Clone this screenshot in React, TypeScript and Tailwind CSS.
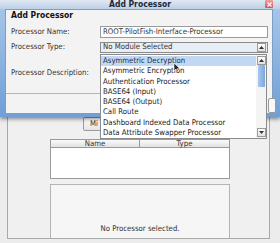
import React from 'react'

const font = "font-['Liberation_Sans_Narrow','DejaVu_Sans_Condensed',sans-serif]"

const processorTypes = [
  'Asymmetric Decryption',
  'Asymmetric Encryption',
  'Authentication Processor',
  'BASE64 (Input)',
  'BASE64 (Output)',
  'Call Route',
  'Dashboard Indexed Data Processor',
  'Data Attribute Swapper Processor',
]

function Arrow({ up }: { up?: boolean }) {
  return (
    <svg width="5" height="3" viewBox="0 0 5 3" className="block">
      {up ? <path d="M0 3 L2.5 0 L5 3 Z" fill="#333" /> : <path d="M0 0 L2.5 3 L5 0 Z" fill="#333" />}
    </svg>
  )
}

function ScrollButton({ up }: { up?: boolean }) {
  return (
    <div className="w-[9px] h-[9px] border border-[#9a9a9a] bg-gradient-to-b from-white to-[#e2e2e2] flex items-center justify-center">
      <Arrow up={up} />
    </div>
  )
}

function BackDialog() {
  return (
    <div className="pt-[95px]">
      <div className="ml-[7px] w-[263px] h-[144px] border border-t-0 border-[#a9a9a9] bg-[#f0f0f0] pl-[42px] flex flex-col">
        <div className="mt-[22px] ml-[33px] w-[22px] h-[14px] border border-[#9a9a9a] rounded-[2px] bg-gradient-to-b from-white to-[#e4e4e4] flex items-center pl-[6px] text-[7.75px] text-[#333]">
          Mi
        </div>
        <div className="mt-[8px] w-[180px] h-[40px] border border-[#9a9a9a] bg-white flex flex-col">
          <div className="h-[8px] flex border-b border-[#9a9a9a] bg-gradient-to-b from-[#fafafa] to-[#e2e2e2] text-[7.75px] leading-[8px] text-[#333]">
            <div className="w-[89px] border-r border-[#9a9a9a] text-center">Name</div>
            <div className="flex-1 text-center">Type</div>
          </div>
        </div>
        <div className="mt-[5px] w-[180px] flex-1 border border-b-0 border-[#b5b5b5] bg-[#f6f6f6] flex items-end justify-center pb-[3px] text-[7.75px] text-[#333]">
          No Processor selected.
        </div>
      </div>
    </div>
  )
}

function FrontDialog() {
  return (
    <div className="absolute left-0 top-0 w-[280px] h-[117px] bg-gradient-to-b from-[#a9c8ea] to-[#6f9fd6] shadow-[0_2px_4px_rgba(0,0,0,0.45)] flex flex-col">
      <div className="h-[10px] relative flex items-center justify-center bg-gradient-to-b from-[#dfe8f2] to-[#bcd0e8]">
        <span className="text-[8.5px] font-bold text-[#1b2a3a] leading-none">Add Processor</span>
        <div className="absolute right-[7px] top-0 w-[8px] h-[8px] rounded-[1px] bg-gradient-to-b from-[#f0a0a0] to-[#d75050] flex items-center justify-center">
          <svg width="5" height="5" viewBox="0 0 5 5">
            <path d="M0.5 0.5 L4.5 4.5 M4.5 0.5 L0.5 4.5" stroke="white" strokeWidth="1.2" />
          </svg>
        </div>
      </div>
      <div className="ml-[5px] mr-[7px] mb-[4px] flex-1 bg-[#f3f3f3] border border-[#7d9ec4] flex flex-col text-[7.75px] text-[#333]">
        <div className="pl-[5px] h-[10px] leading-[10px] text-[8.5px] font-bold text-[#111]">Add Processor</div>
        <div className="mt-[6px] pl-[5px] flex items-center h-[12px]">
          <span className="w-[89px]">Processor Name:</span>
          <div className="w-[168px] h-[12px] border border-[#9a9a9a] bg-white flex items-center pl-[2px]">
            ROOT-PilotFish-Interface-Processor
          </div>
        </div>
        <div className="mt-[4px] pl-[5px] flex items-center h-[11px]">
          <span className="w-[89px]">Processor Type:</span>
          <div className="w-[168px] h-[11px] border border-[#8a8a8a] bg-[#e8eef5] flex items-center pl-[2px] pr-[1px]">
            <span className="flex-1">No Module Selected</span>
            <ScrollButton up />
          </div>
        </div>
        <div className="mt-[15px] pl-[5px] h-[10px] flex items-center">Processor Description:</div>
        <div className="mt-[15px] w-[95px] h-px bg-[#b4b4b4]" />
        <div className="mt-[4px] self-end mr-[-4px] w-[8px] h-[15px] border border-[#9a9a9a] rounded-[2px] bg-[#f8f8f8]" />
      </div>
    </div>
  )
}

function TypeList() {
  return (
    <div className="absolute left-[100px] top-[54px] w-[167px] h-[85px] border border-[#8a8a8a] bg-white flex text-[7.75px] text-[#222]">
      <div className="flex-1 flex flex-col pt-[1px]">
        {processorTypes.map((t, i) => (
          <div
            key={t}
            className={i === 0 ? 'h-[10.25px] leading-[10.25px] pl-[2px] bg-[#c2d8f2] text-[#1a2f4a]' : 'h-[10.25px] leading-[10.25px] pl-[2px]'}
          >
            {t}
          </div>
        ))}
      </div>
      <div className="w-[10px] flex flex-col items-center pt-[1px] pb-[1px] bg-[#f4f4f4]">
        <ScrollButton up />
        <div className="w-[7px] h-[22px] bg-gradient-to-r from-[#a9c8ee] to-[#7aa6dc] rounded-[1px]" />
        <div className="flex-1" />
        <ScrollButton />
      </div>
      <svg width="8" height="10" viewBox="0 0 8 10" className="absolute left-[72px] top-[8px]">
        <path d="M1 0 L1 8 L3 6 L4.5 9 L5.5 8.5 L4.2 5.8 L7 5.8 Z" fill="#222" stroke="white" strokeWidth="0.6" />
      </svg>
    </div>
  )
}

export default function App() {
  return (
    <div className={`relative w-[280px] h-[243px] overflow-hidden bg-[#ececec] ${font}`}>
      <BackDialog />
      <FrontDialog />
      <TypeList />
    </div>
  )
}
